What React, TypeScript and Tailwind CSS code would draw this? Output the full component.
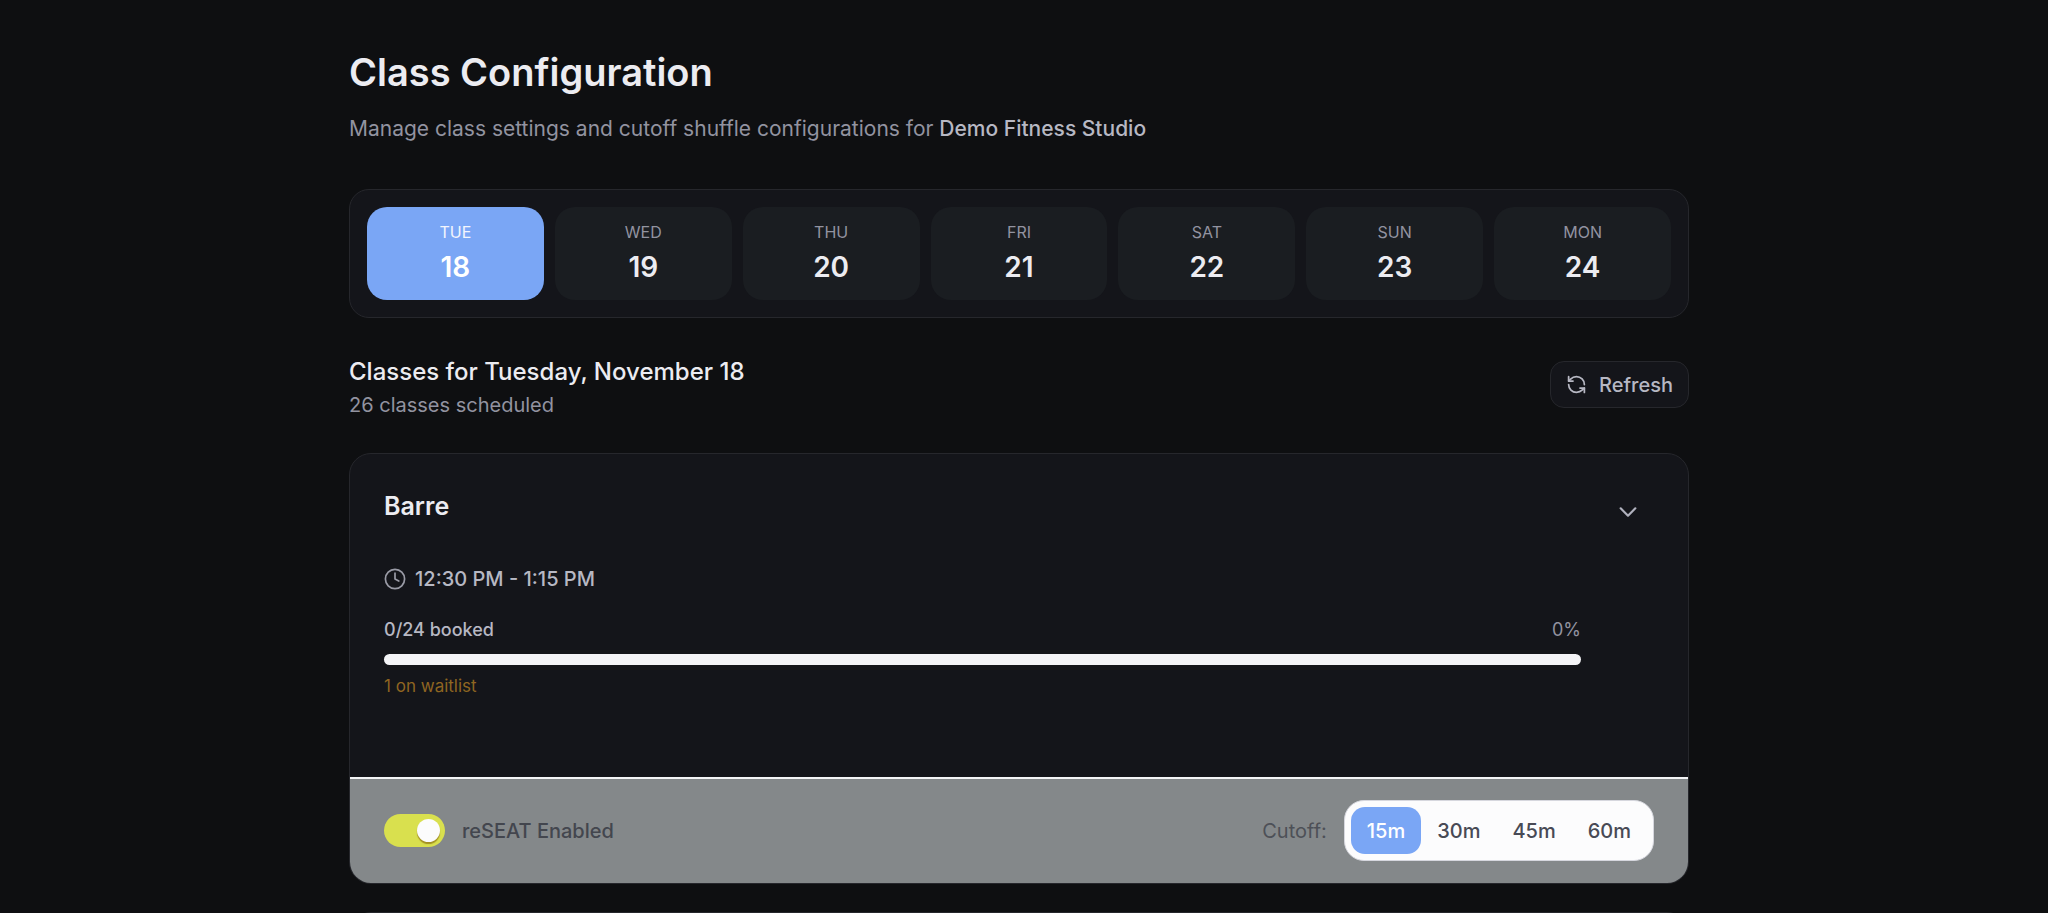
import { useState } from "react";

const days = [
  { name: "TUE", date: 18 },
  { name: "WED", date: 19 },
  { name: "THU", date: 20 },
  { name: "FRI", date: 21 },
  { name: "SAT", date: 22 },
  { name: "SUN", date: 23 },
  { name: "MON", date: 24 },
];

const cutoffs = [15, 30, 45, 60];

function RefreshIcon() {
  return (
    <svg className="size-[21px]" viewBox="0 0 24 24" fill="none" stroke="currentColor" strokeWidth="2" strokeLinecap="round" strokeLinejoin="round" aria-hidden="true">
      <path d="M21 12a9 9 0 0 0-9-9 9.75 9.75 0 0 0-6.74 2.74L3 8" />
      <path d="M3 3v5h5" />
      <path d="M3 12a9 9 0 0 0 9 9 9.75 9.75 0 0 0 6.74-2.74L21 16" />
      <path d="M16 16h5v5" />
    </svg>
  );
}

function ClockIcon() {
  return (
    <svg className="size-[22px] text-[#9a9ba6]" viewBox="0 0 22 22" fill="none" stroke="currentColor" strokeWidth="1.7" strokeLinecap="round" strokeLinejoin="round" aria-hidden="true">
      <circle cx="11" cy="11" r="9.6" />
      <path d="M11 5.2V11l3.8 2" />
    </svg>
  );
}

function ChevronIcon() {
  return (
    <svg className="size-[22px]" viewBox="0 0 24 24" fill="none" stroke="currentColor" strokeWidth="2.4" strokeLinecap="round" strokeLinejoin="round" aria-hidden="true">
      <path d="m4 8 8 8 8-8" />
    </svg>
  );
}

function ClassCard() {
  const [enabled, setEnabled] = useState(true);
  const [cutoff, setCutoff] = useState(15);
  const booked = 0;
  const capacity = 24;
  const percent = Math.round((booked / capacity) * 100);

  return (
    <article className="overflow-hidden rounded-[22px] border border-[#26272c] bg-[#14151a]">
      <div className="flex items-start px-[34px] pt-[32px] pb-[79px]">
        <div className="min-w-0 flex-1">
          <h3 className="text-[25px] leading-[40px] font-semibold text-[#ececf1]">Barre</h3>
          <p className="mt-[39px] flex items-center gap-[9px] text-[20px] leading-[28px] font-medium text-[#b7b8c3]">
            <ClockIcon />
            12:30 PM - 1:15 PM
          </p>
          <div className="mt-[25px] flex justify-between text-[18px] leading-[24px]">
            <span className="font-medium text-[#b7b8c3]">{booked}/{capacity} booked</span>
            <span className="text-[#9293a0]">{percent}%</span>
          </div>
          <div className="mt-[12px] h-[11px] overflow-hidden rounded-full bg-[#f4f4f7]">
            <div className="h-full bg-[#7aa6f5]" style={{ width: `${percent}%` }} />
          </div>
          <p className="mt-[9px] text-[17px] leading-[24px] text-[#8f6521]">1 on waitlist</p>
        </div>
        <button type="button" aria-label="Expand class" className="ml-[21px] flex size-[52px] items-center justify-center text-[#b0b1bd]">
          <ChevronIcon />
        </button>
      </div>
      <div className="flex items-center justify-between border-t-2 border-[#f3f4f6] bg-[#84888a] px-[34px] pt-[21px] pb-[22px]">
        <label className="flex items-center gap-[17px] text-[20px] leading-[28px] font-medium text-[#43464e]">
          <input
            type="checkbox"
            checked={enabled}
            onChange={() => setEnabled(!enabled)}
            className="flex h-[33px] w-[61px] appearance-none items-center rounded-full bg-[#6b7280] px-[5px] before:size-[23px] before:rounded-full before:bg-[#fcfcfc] before:shadow-[0_2px_1px_rgba(120,80,0,0.55)] checked:justify-end checked:bg-[#d9e04e]"
          />
          reSEAT Enabled
        </label>
        <div className="flex items-center gap-[17px] text-[20px] leading-[28px]">
          <span id="cutoff-label" className="text-[#4d5057]">Cutoff:</span>
          <div role="group" aria-labelledby="cutoff-label" className="flex rounded-[20px] border border-[#d6d7de] bg-[#fcfcfd] p-[6px]">
            {cutoffs.map((minutes) => (
              <button
                key={minutes}
                type="button"
                aria-pressed={cutoff === minutes}
                onClick={() => setCutoff(minutes)}
                className={
                  cutoff === minutes
                    ? "h-[47px] rounded-[14px] bg-[#7aa6f5] px-[16px] font-medium text-white"
                    : "h-[47px] rounded-[14px] px-[16px] font-medium text-[#484a55]"
                }
              >
                {minutes}m
              </button>
            ))}
          </div>
        </div>
      </div>
    </article>
  );
}

export default function App() {
  const [selected, setSelected] = useState(18);

  return (
    <div className="h-screen overflow-hidden bg-[#0e0f11] pr-[10px] font-['Inter',sans-serif]">
      <main className="mx-auto max-w-[1340px] pt-[44px]">
        <h1 className="text-[38px] leading-[56px] font-semibold text-[#ececf1]">Class Configuration</h1>
        <p className="mt-[13px] text-[21px] leading-[32px] text-[#9293a0]">
          Manage class settings and cutoff shuffle configurations for{" "}
          <strong className="font-medium text-[#b7b8c3]">Demo Fitness Studio</strong>
        </p>

        <div className="mt-[44px] grid grid-cols-7 gap-[11px] rounded-[20px] border border-[#26272c] bg-[#14151a] p-[17px]">
          {days.map((day) => {
            const active = day.date === selected;
            return (
              <button
                key={day.date}
                type="button"
                aria-pressed={active}
                onClick={() => setSelected(day.date)}
                className={
                  active
                    ? "flex h-[93px] flex-col items-center rounded-[20px] bg-[#7aa6f5] pt-[13px] text-white"
                    : "flex h-[93px] flex-col items-center rounded-[20px] bg-[#1a1d21] pt-[13px] text-[#ececf1]"
                }
              >
                <span className={active ? "text-[16px] leading-[24px] text-[#f2f5fd]" : "text-[16px] leading-[24px] text-[#9293a0]"}>
                  {day.name}
                </span>
                <span className="mt-[5px] text-[28px] leading-[36px] font-semibold">{day.date}</span>
              </button>
            );
          })}
        </div>

        <div className="mt-[38px] flex items-start justify-between">
          <div>
            <h2 className="text-[24px] leading-[32px] font-medium text-[#ececf1]">Classes for Tuesday, November 18</h2>
            <p className="mt-[3px] text-[20px] leading-[28px] text-[#9293a0]">26 classes scheduled</p>
          </div>
          <button type="button" className="mt-[5px] flex h-[47px] items-center gap-[12px] rounded-[14px] border border-[#26272c] bg-[#14151a] px-[15px] text-[20px] font-medium text-[#b7b8c3]">
            <RefreshIcon />
            Refresh
          </button>
        </div>

        <section className="mt-[34px] flex flex-col gap-[28px]">
          <ClassCard />
          <div className="h-[200px] rounded-[22px] border border-[#26272c] bg-[#14151a]" />
        </section>
      </main>
    </div>
  );
}
